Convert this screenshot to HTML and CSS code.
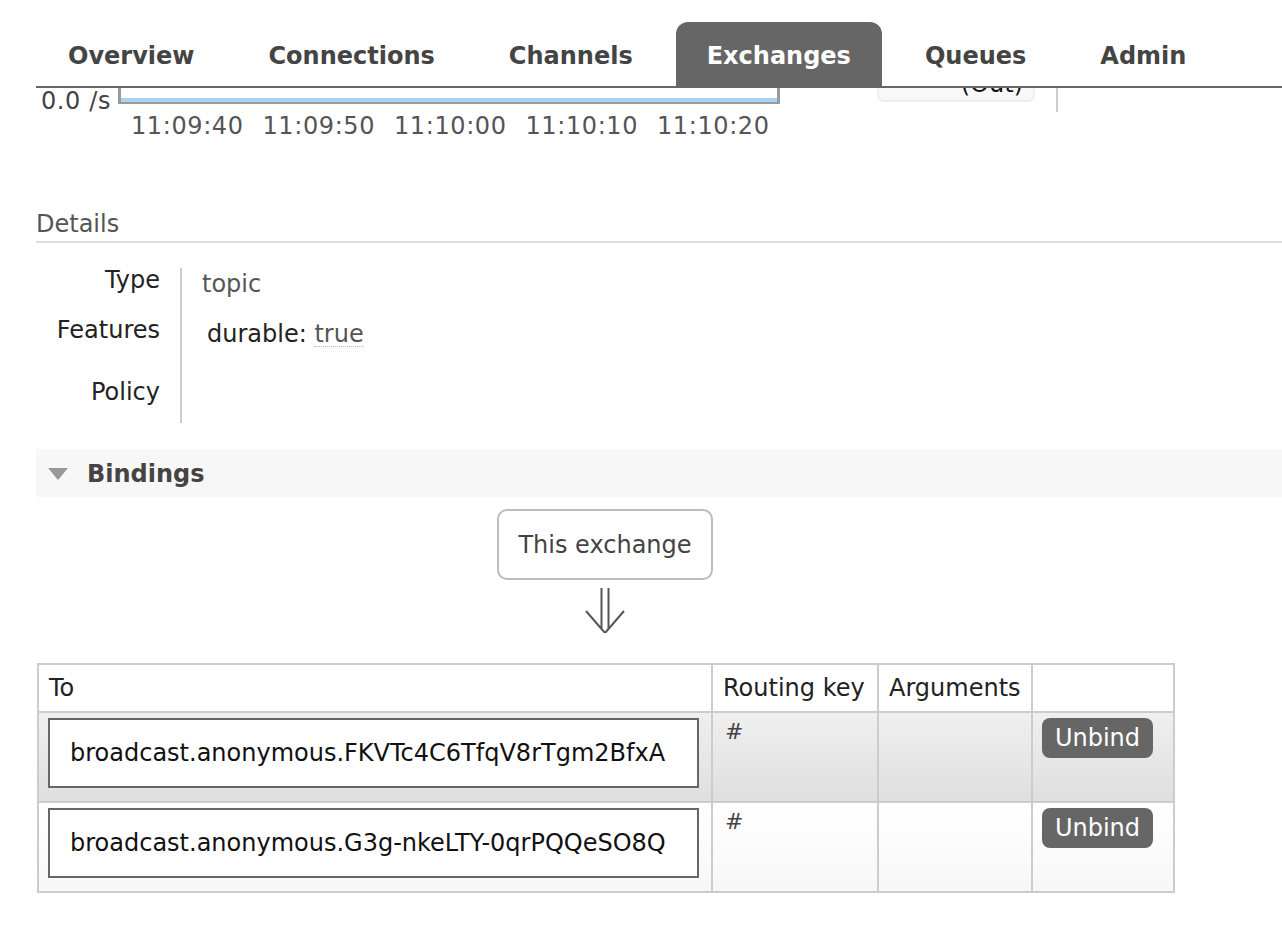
FILE: index.html
```html
<!DOCTYPE html>
<html lang="en">
<head>
<meta charset="utf-8">
<title>RabbitMQ Management - Exchange</title>
<link rel="stylesheet" href="styles.css">
</head>
<body>
<header class="topbar">
  <nav class="tabs">
    <a class="tab">Overview</a>
    <a class="tab">Connections</a>
    <a class="tab">Channels</a>
    <a class="tab tab-active">Exchanges</a>
    <a class="tab">Queues</a>
    <a class="tab">Admin</a>
  </nav>
</header>

<main class="page">
  <section class="rates">
    <div class="chart-block">
      <div class="chart-row">
        <div class="y-axis"><span>0.0 /s</span></div>
        <div class="chart"><div class="series"></div></div>
      </div>
      <div class="x-axis">
        <span>11:09:40</span>
        <span>11:09:50</span>
        <span>11:10:00</span>
        <span>11:10:10</span>
        <span>11:10:20</span>
      </div>
    </div>
    <div class="legend"><span>(Out)</span></div>
    <div class="legend-divider"></div>
  </section>

  <h2 class="section-title">Details</h2>
  <div class="facts">
    <div class="fact-label">Type</div>
    <div class="fact-value fact-type">topic</div>
    <div class="fact-label">Features</div>
    <div class="fact-value fact-features"><span class="feature-key">durable:</span> <abbr class="feature-val">true</abbr></div>
    <div class="fact-label">Policy</div>
    <div class="fact-value"></div>
  </div>

  <section class="bindings">
    <h2 class="collapsible"><span class="triangle"></span>Bindings</h2>
    <div class="diagram">
      <div class="this-exchange">This exchange</div>
      <svg class="down-arrow" width="42" height="45" viewBox="0 0 42 45" aria-hidden="true">
        <path d="M17.5 0 V41 M24.5 0 V41 M2 23 L21 45 L40 23" fill="none" stroke="#555" stroke-width="2"/>
      </svg>
    </div>
    <table class="list">
      <colgroup>
        <col class="col-to">
        <col class="col-key">
        <col class="col-args">
        <col class="col-action">
      </colgroup>
      <thead>
        <tr><th>To</th><th>Routing key</th><th>Arguments</th><th></th></tr>
      </thead>
      <tbody>
        <tr class="row-alt1">
          <td><span class="queue-box">broadcast.anonymous.FKVTc4C6TfqV8rTgm2BfxA</span></td>
          <td class="key">#</td>
          <td></td>
          <td><button class="btn">Unbind</button></td>
        </tr>
        <tr class="row-alt2">
          <td><span class="queue-box">broadcast.anonymous.G3g-nkeLTY-0qrPQQeSO8Q</span></td>
          <td class="key">#</td>
          <td></td>
          <td><button class="btn">Unbind</button></td>
        </tr>
      </tbody>
    </table>
  </section>
</main>
</body>
</html>
```

FILE: styles.css
```css
* { box-sizing: border-box; }

body {
  margin: 0;
  font-family: "DejaVu Sans", Verdana, sans-serif;
  font-size: 24px;
  color: #222;
  background: #fff;
}

/* fixed top navigation, page content scrolls under it */
.topbar {
  position: fixed;
  top: 0;
  left: 0;
  right: 0;
  height: 88px;
  padding-left: 36px;
  background: #fff;
  z-index: 10;
}

.tabs {
  height: 88px;
  display: flex;
  align-items: flex-end;
  gap: 12px;
  padding-left: 1px;
  border-bottom: 2px solid #666;
}

.tab {
  height: 64px;
  padding: 3px 31px 0;
  display: flex;
  align-items: center;
  font-weight: bold;
  color: #444;
  border-radius: 12px 12px 0 0;
}

.tab-active {
  background: #666;
  color: #fff;
}

.page {
  padding-left: 36px;
}

/* message rates chart (partially scrolled under the nav) */
.rates {
  display: flex;
  align-items: flex-start;
}

.chart-block {
  width: 744px;
  flex: none;
}

.chart-row {
  display: flex;
  height: 104px;
}

.y-axis {
  width: 82px;
  padding-right: 7px;
  display: flex;
  flex-direction: column;
  justify-content: flex-end;
  align-items: flex-end;
  color: #444;
  letter-spacing: 0.6px;
}

.y-axis span {
  line-height: 24px;
  margin-bottom: -9px;
}

.chart {
  width: 662px;
  height: 104px;
  border: 3px solid #999;
  border-top: none;
  border-bottom-width: 2px;
  display: flex;
  align-items: flex-end;
}

.series {
  width: 100%;
  height: 4px;
  background: #a7d4f4;
}

.x-axis {
  display: flex;
  margin-top: 10px;
  margin-left: 95px;
  line-height: 24px;
  color: #555;
  letter-spacing: 0.6px;
}

.x-axis span {
  width: 131.5px;
  flex: none;
}

.legend {
  margin-left: 97px;
  width: 158px;
  height: 102px;
  flex: none;
  background: #f8f8f8;
  border: 2px solid #eee;
  border-top: none;
  border-radius: 0 0 7px 7px;
  display: flex;
  align-items: flex-end;
  justify-content: flex-end;
  padding: 0 10px 4px 0;
  line-height: 24px;
  color: #111;
}

.legend-divider {
  margin-left: 21px;
  width: 2px;
  height: 112px;
  flex: none;
  background: #ccc;
}

/* details */
.section-title {
  margin: 74px 0 0;
  font-size: 24px;
  font-weight: normal;
  line-height: 24px;
  color: #555;
  padding-bottom: 5px;
  border-bottom: 2px solid #ddd;
}

.facts {
  margin-top: 25px;
  display: grid;
  grid-template-columns: 144px 1fr;
  grid-template-rows: 50px 62px 43px;
  line-height: 24px;
}

.fact-label {
  text-align: right;
  padding-right: 20px;
  color: #222;
}

.fact-value {
  border-left: 2px solid #ccc;
  padding-left: 20px;
  color: #555;
}

.fact-type { padding-top: 4px; }

.fact-features { padding-left: 25px; padding-top: 1px; }

.feature-key { color: #222; }

.feature-val {
  text-decoration: none;
  color: #555;
  display: inline-block;
  padding-top: 3px;
  border-bottom: 1px dotted #bbb;
}

/* bindings */
.bindings {
  margin-top: 26px;
}

.collapsible {
  margin: 0;
  height: 48px;
  background: #f7f7f7;
  display: flex;
  align-items: center;
  padding: 2px 0 0 12px;
  font-size: 24px;
  font-weight: bold;
  color: #444;
}

.triangle {
  width: 0;
  height: 0;
  border-left: 10px solid transparent;
  border-right: 10px solid transparent;
  border-top: 12px solid #999;
  margin-right: 19px;
}

.diagram {
  width: 1136px;
  margin-left: 1px;
  padding-top: 12px;
  display: flex;
  flex-direction: column;
  align-items: center;
}

.this-exchange {
  width: 216px;
  height: 71px;
  border: 2px solid #bbb;
  border-radius: 10px;
  display: flex;
  align-items: center;
  justify-content: center;
  color: #444;
}

.down-arrow {
  display: block;
  margin-top: 8px;
}

.list {
  margin-top: 30px;
  margin-left: 1px;
  width: 1136px;
  border-collapse: collapse;
  table-layout: fixed;
}

.col-to { width: 674px; }
.col-key { width: 166px; }
.col-args { width: 154px; }
.col-action { width: 142px; }

.list th,
.list td {
  border: 2px solid #ccc;
  text-align: left;
  font-weight: normal;
  padding: 0 10px;
}

.list th {
  height: 48px;
  color: #222;
}

.list td {
  height: 90px;
  vertical-align: top;
  padding-top: 5px;
}

.row-alt1 td { background: linear-gradient(#efefef, #dfdfdf); }
.row-alt2 td { background: linear-gradient(#ffffff, #f7f7f7); }

.queue-box {
  display: flex;
  align-items: center;
  height: 70px;
  padding: 0 20px;
  margin: 0 2px 0 -1px;
  background: #fff;
  border: 2px solid #666;
  color: #111;
}

.list td.key {
  font-size: 22px;
  color: #444;
  padding-top: 6px;
  padding-left: 12px;
}

.btn {
  font-family: inherit;
  font-size: 24px;
  height: 40px;
  width: 111px;
  padding: 0;
  margin-left: -1px;
  border: none;
  border-radius: 8px;
  background: #666;
  color: #fff;
}
```
